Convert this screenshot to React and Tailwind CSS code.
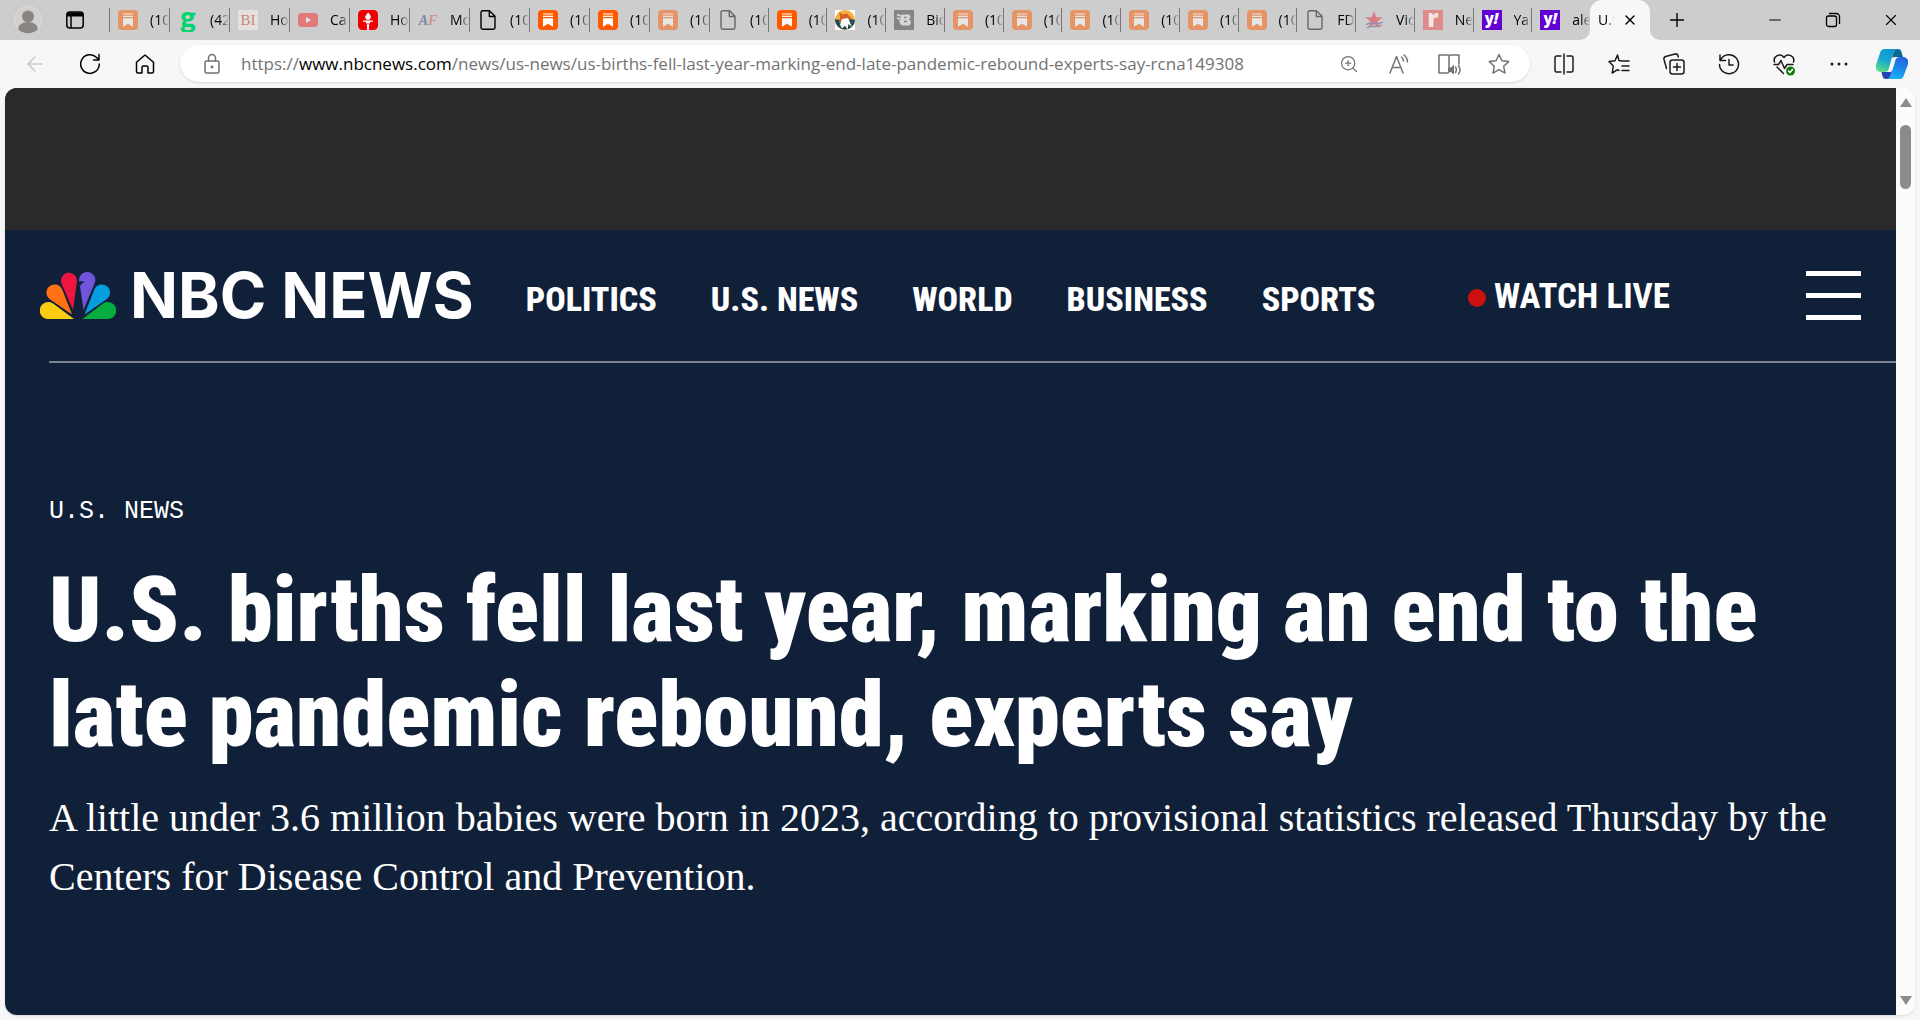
import { useState } from 'react';
import {
  ArrowLeft,
  Minus,
  Plus,
  X,
  ZoomIn,
} from 'lucide-react';

const tabs = [
  { icon: 'substack', faded: true, title: '(10' },
  { icon: 'g', title: '(42' },
  { icon: 'bi', faded: true, title: 'Ho' },
  { icon: 'youtube', faded: true, title: 'Ca' },
  { icon: 'torch', title: 'Ho' },
  { icon: 'af', faded: true, title: 'Mo' },
  { icon: 'file', title: '(10' },
  { icon: 'substack', title: '(10' },
  { icon: 'substack', title: '(10' },
  { icon: 'substack', faded: true, title: '(10' },
  { icon: 'file', faded: true, title: '(10' },
  { icon: 'substack', title: '(10' },
  { icon: 'fox', title: '(10' },
  { icon: 'biden', faded: true, title: 'Bid' },
  { icon: 'substack', faded: true, title: '(10' },
  { icon: 'substack', faded: true, title: '(10' },
  { icon: 'substack', faded: true, title: '(10' },
  { icon: 'substack', faded: true, title: '(10' },
  { icon: 'substack', faded: true, title: '(10' },
  { icon: 'substack', faded: true, title: '(10' },
  { icon: 'file', faded: true, title: 'FD' },
  { icon: 'star', faded: true, title: 'Vic' },
  { icon: 'r', faded: true, title: 'Ne' },
  { icon: 'yahoo', title: 'Yal' },
  { icon: 'yahoo', title: 'ale' },
];

const navLinks = ['POLITICS', 'U.S. NEWS', 'WORLD', 'BUSINESS', 'SPORTS'];

function Favicon({ name, faded }) {
  const box = faded ? 'size-5 shrink-0 opacity-50' : 'size-5 shrink-0';
  switch (name) {
    case 'substack':
      return (
        <svg viewBox="0 0 20 20" className={box}>
          <rect width="20" height="20" rx="4" fill="#ff5a00" />
          <path d="M5 4h10M5 6.3h10" stroke="#fff" strokeWidth="1.2" />
          <path d="M5 8.2h10v8.6l-5-3-5 3z" fill="#fff" />
        </svg>
      );
    case 'g':
      return <span className="flex size-5 shrink-0 items-center justify-center text-[30px] leading-5 pb-2 font-black text-[#00d56f] font-['Lato']">g</span>;
    case 'bi':
      return <span className="flex size-5 shrink-0 items-center justify-center bg-[#e5e2de] text-[15px] text-[#c98577] font-['Liberation_Serif']">BI</span>;
    case 'youtube':
      return (
        <svg viewBox="0 0 20 20" className={box}>
          <rect y="3" width="20" height="14" rx="3.5" fill="#f52a2a" />
          <path d="M8 7l5 3-5 3z" fill="#fff" />
        </svg>
      );
    case 'torch':
      return (
        <svg viewBox="0 0 20 20" className={box}>
          <rect width="20" height="20" rx="4.5" fill="#f00000" />
          <path d="M10 2.500c2 2 2.800 3 2.800 4.400a2.800 2.800 0 0 1-5.600 0C7.200 5.500 9 4.500 10 2.500z" fill="#fff" />
          <path d="M5 10.500h10v1.300h-2.500l-.8 1.700H8.300l-.8-1.700H5zM8.800 14.300h2.400L10.800 20H9.200z" fill="#fff" />
        </svg>
      );
    case 'af':
      return <span className="flex size-5 shrink-0 items-center justify-center text-[14px] font-bold italic text-[#7d86ab] font-['Liberation_Serif']">A<b className="text-[#cf9398]">F</b></span>;
    case 'file':
      return (
        <svg viewBox="0 0 20 20" className={box} fill="none" stroke="#000" strokeWidth="1.4">
          <path d="M5 .8h6.500L17 6.300V17.500a1.700 1.700 0 0 1-1.700 1.700H4.700A1.700 1.700 0 0 1 3 17.500V2.500A1.700 1.700 0 0 1 4.700.8zM11.300.8v5.700H17" strokeLinejoin="round" />
        </svg>
      );
    case 'fox':
      return (
        <svg viewBox="0 0 20 20" className={box}>
          <rect width="20" height="20" fill="#fff" />
          <circle cx="10" cy="10" r="10" fill="#f2b23c" />
          <path d="M0 9a10 10 0 0 0 20 1l-4-1-8 2z" fill="#1f4d5c" />
          <path d="M4 2l4 2.500 4-1 5 5.500-4 1-5 1-4 2 1-6z" fill="#d9602a" />
          <path d="M7 9l6-1 4 9-3.500-3-1 5.500-2.500-4-3 3-2-4z" fill="#fff" />
        </svg>
      );
    case 'biden':
      return (
        <svg viewBox="0 0 20 20" className="size-5 shrink-0">
          <rect width="20" height="20" fill="#858585" />
          <path d="M3 4.500l5 2M3 8l5 1.500M5 11l3 1" stroke="#d6d6d6" strokeWidth="1.800" />
          <path d="M7.500 4.500H13a2.500 2.500 0 0 1 1.500 5 3 3 0 0 1-1.500 6H9a3 3 0 0 1-3-3" fill="#d6d6d6" />
          <path d="M10 7.500h2.500M10 11.500h3" stroke="#858585" strokeWidth="1.300" />
        </svg>
      );
    case 'star':
      return (
        <svg viewBox="0 0 20 20" className={box}>
          <path d="M10 1l2.300 6.300H19l-5.300 4 2 6.700L10 14l-5.700 4 2-6.700L1 7.300h6.700z" fill="#e8323c" />
          <path d="M2 15c5-5 8 2 17-3M3 18c5-4 9 1 15-3" stroke="#4553a0" strokeWidth="1.300" fill="none" />
        </svg>
      );
    case 'r':
      return <span className="flex size-5 shrink-0 items-center justify-center bg-[#e08a8a] pb-1 text-[24px] leading-5 font-black text-[#f0e6e6] font-['Open_Sans']">r</span>;
    default:
      return <span className="flex size-5 shrink-0 items-center justify-center bg-[#6001d2] pb-1 text-[15px] leading-4 font-black text-white font-['Open_Sans']">y<i>!</i></span>;
  }
}

function Tab({ tab, wide }) {
  const size = wide ? 'w-[60px] shrink-0' : 'min-w-0 flex-1';
  return (
    <button className={`flex h-10 items-center ${size}`}>
      <span className="h-6 w-px shrink-0 bg-[#777]" />
      <span className="flex min-w-0 flex-1 items-center gap-3 overflow-hidden pl-2">
        <Favicon name={tab.icon} faded={tab.faded} />
        <span className="min-w-0 flex-1 overflow-hidden mask-r-from-50% pb-0.5 text-left text-[14px] whitespace-nowrap text-black">
          {tab.title}
        </span>
      </span>
    </button>
  );
}

function TabStrip() {
  return (
    <div className="flex h-10 shrink-0 items-center bg-[#cdcdcd]">
      <button aria-label="Profile" className="ml-3.5 shrink-0">
        <svg viewBox="0 0 28 28" className="size-7">
          <circle cx="14" cy="14" r="13.500" fill="#d2d0ce" stroke="#e1dfdd" />
          <circle cx="14" cy="10.500" r="6" fill="#8a8582" />
          <path d="M4 23a10 7 0 0 1 20 0 13.500 13.500 0 0 1-20 0z" fill="#8a8582" />
        </svg>
      </button>
      <button aria-label="Tab actions" className="ml-6 shrink-0">
        <svg viewBox="0 0 18 18" className="size-[18px]" fill="none" stroke="#000" strokeWidth="1.500">
          <rect x=".8" y="1" width="16.400" height="16" rx="3" />
          <path d="M1 3.500h16" strokeWidth="4" />
          <path d="M5 5v12" />
        </svg>
      </button>
      <div className="ml-[25px] flex min-w-0 flex-1">
        {tabs.map((tab, i) => (
          <Tab key={i} tab={tab} wide={i < 10} />
        ))}
      </div>
      <div className="relative flex h-10 w-[60px] shrink-0 items-center gap-2 rounded-t-xl bg-[#f7f7f7] pl-2">
        <svg viewBox="0 0 10 10" className="absolute bottom-0 -left-2.5 size-2.5">
          <path d="M10 0v10H0A10 10 0 0 0 10 0z" fill="#f7f7f7" />
        </svg>
        <svg viewBox="0 0 10 10" className="absolute bottom-0 -right-2.5 size-2.5">
          <path d="M0 0v10h10A10 10 0 0 1 0 0z" fill="#f7f7f7" />
        </svg>
        <span className="w-4 overflow-hidden mask-r-from-60% pb-0.5 text-[14px] whitespace-nowrap">U.S</span>
        <button aria-label="Close tab"><X className="size-4" strokeWidth={2} /></button>
      </div>
      <div className="flex w-[270px] shrink-0 items-center pl-4">
        <button aria-label="New tab"><Plus className="size-[22px]" strokeWidth={1.5} /></button>
        <div className="ml-auto flex items-center gap-10 pr-5">
          <button aria-label="Minimize"><Minus className="size-[18px]" strokeWidth={1.5} /></button>
          <button aria-label="Restore">
            <svg viewBox="0 0 18 18" className="size-[18px]" fill="none" stroke="#000" strokeWidth="1.300">
              <rect x="2.500" y="5" width="10" height="10.500" rx="2" />
              <path d="M5 2.500h7.500A3 3 0 0 1 15.500 5.500V13" />
            </svg>
          </button>
          <button aria-label="Close"><X className="size-[18px]" strokeWidth={1.5} /></button>
        </div>
      </div>
    </div>
  );
}

const starPath = 'M12 2.500l2.900 6.300 6.800.8-5 4.700 1.300 6.800-6-3.400-6 3.400 1.300-6.800-5-4.700 6.800-.8z';

function Icon({ children, className = 'size-6' }) {
  return (
    <svg viewBox="0 0 24 24" className={className} fill="none" stroke="currentColor" strokeWidth="1.500" strokeLinecap="round" strokeLinejoin="round">
      {children}
    </svg>
  );
}

function Toolbar() {
  const [url, setUrl] = useState('/news/us-news/us-births-fell-last-year-marking-end-late-pandemic-rebound-experts-say-rcna149308');

  return (
    <div className="flex h-12 shrink-0 items-center bg-[#f7f7f7] pb-px">
      <div className="flex w-[180px] shrink-0 items-center gap-[31px] pl-[23px]">
        <button aria-label="Back"><ArrowLeft className="size-6 text-[#c9c9c9]" strokeWidth={1.5} /></button>
        <button aria-label="Refresh">
          <Icon>
            <path d="M21.300 12A9.300 9.300 0 1 1 18.600 5.500L21 8M21 2.500V8h-5.500" />
          </Icon>
        </button>
        <button aria-label="Home">
          <Icon>
            <path d="M3.500 10.300L12 3l8.500 7.300V19.500a1.500 1.500 0 0 1-1.500 1.500h-4v-5.500a1.500 1.500 0 0 0-1.500-1.500h-3a1.500 1.500 0 0 0-1.500 1.500V21H5a1.500 1.500 0 0 1-1.500-1.500z" />
          </Icon>
        </button>
      </div>
      <div className="flex h-[37px] min-w-0 flex-1 items-center rounded-full bg-white pr-[19px] pl-5 text-[#737373] shadow-sm">
        <Icon>
          <rect x="5" y="9" width="14" height="12" rx="1.500" />
          <path d="M8.500 9V6a3.500 3.500 0 0 1 7 0v3" />
          <circle cx="12" cy="15" r=".7" fill="currentColor" />
        </Icon>
        <label htmlFor="url" className="ml-[17px] text-[17px]">
          https://<span className="text-black">www.nbcnews.com</span>
        </label>
        <input id="url" value={url} onChange={(e) => setUrl(e.target.value)} className="min-w-0 flex-1 text-[17px] outline-none" />
        <div className="flex items-center gap-[26px]">
          <button aria-label="Zoom"><ZoomIn className="size-6 p-0.5" strokeWidth={1.5} /></button>
          <button aria-label="Read aloud">
            <Icon>
              <path d="M3 21L9.500 4.500 16 21M5.300 15.500h8.400M14.500 5c1.500 1 2 2.500 2 4M17 3c2.500 2 3.500 4 3.500 7" />
            </Icon>
          </button>
          <button aria-label="Immersive reader">
            <Icon>
              <path d="M12 5v14.500a1.500 1.500 0 0 1-1.500 1.500H2V3h8.500A1.500 1.500 0 0 1 12 4.500 1.500 1.500 0 0 1 13.500 3H22v9M18.500 15c1 1.500 1 4 0 5.500M21.500 13.500c1.800 2.500 1.800 6 0 8.500" />
              <path d="M12 16h2l2.500-2.500v8.500L14 19.500h-2z" fill="currentColor" strokeWidth="1" />
            </Icon>
          </button>
          <button aria-label="Add to favorites"><Icon><path d={starPath} /></Icon></button>
        </div>
      </div>
      <div className="flex w-[390px] shrink-0 items-center gap-[31px] pl-[22px] text-[#1b1b1b]">
        <button aria-label="Split screen">
          <Icon>
            <path d="M9 4H4.500A1.500 1.500 0 0 0 3 5.500v13A1.500 1.500 0 0 0 4.500 20H9M12 2v20M15 4h4.500A1.500 1.500 0 0 1 21 5.500v13a1.500 1.500 0 0 1-1.500 1.500H15" />
          </Icon>
        </button>
        <button aria-label="Favorites">
          <Icon>
            <path d="M22 9h-7L12 8.600 10.500 3 8 8.800l-6 .7 4.300 4.500L5.200 21l5.300-3.300 1.500.8M15 14h7M15 18.500h7" />
          </Icon>
        </button>
        <button aria-label="Collections">
          <Icon>
            <rect x="8" y="8" width="14" height="14" rx="2.500" />
            <path d="M15 11.500v7M11.500 15h7M4.500 16.500L2 7.500A2.500 2.500 0 0 1 3.700 4.500L13 2a2.500 2.500 0 0 1 3 1.700L16.300 5" />
          </Icon>
        </button>
        <button aria-label="History">
          <Icon>
            <path d="M3 3v5.500h5.500M3.500 8A9.500 9.500 0 1 1 2.500 12.500M12 7.500V13h4" />
          </Icon>
        </button>
        <button aria-label="Browser essentials">
          <Icon>
            <path d="M2.500 10A5.300 5.300 0 0 1 12 5.500 5.300 5.300 0 0 1 21.500 10M2 12.500h4.500L9 8.500l3.500 8 2.500-4h6M5 15l6.500 6.500" />
            <circle cx="18.500" cy="19" r="4.500" fill="#107c10" stroke="none" />
            <path d="M16.500 19l1.500 1.500 2.500-3" stroke="#fff" />
          </Icon>
        </button>
        <button aria-label="Settings and more">
          <Icon>
            <g fill="currentColor" stroke="none">
              <circle cx="5" cy="12" r="1.500" />
              <circle cx="12" cy="12" r="1.500" />
              <circle cx="19" cy="12" r="1.500" />
            </g>
          </Icon>
        </button>
        <button aria-label="Copilot" className="-ml-1.5">
          <svg viewBox="0 0 32 32" className="size-8">
            <defs>
              <linearGradient id="copilotLeft" x1=".6" y1="0" x2=".2" y2="1">
                <stop stopColor="#0b93d6" />
                <stop offset=".5" stopColor="#18a9d0" />
                <stop offset="1" stopColor="#62e07c" />
              </linearGradient>
              <linearGradient id="copilotRight" x1=".7" y1="0" x2=".4" y2="1">
                <stop stopColor="#2460dc" />
                <stop offset="1" stopColor="#14b0f6" />
              </linearGradient>
            </defs>
            <path d="M9 1h13c-3 0-4 2-5 5l-4 14c-1 3-2 4-5 4H5c-4 0-6-3-5-7l4-12c1-3 2-4 5-4z" fill="url(#copilotLeft)" />
            <path d="M17 6c1-3 2-5 5-5 2 0 3 1 3.500 3L27 9h-6c-2 0-3 0-5 1z" fill="#0a6a8c" />
            <path d="M23 31H10c3 0 4-2 5-5l4-13c1-3 2-4 5-4h3c4 0 6 3 5 7l-4 11c-1 3-2 4-5 4z" fill="url(#copilotRight)" />
            <path d="M15 26c-1 3-2 5-5 5-2 0-3-1-3.500-3L5.500 24H10c3 0 4 0 6-1z" fill="#2242b8" />
            <path d="M16 10c1-1 3-1 6-1-2 .5-2.500 2-3 4l-3 10c-1 1-3 1-5 1 1.500-.5 2-2 2.500-4z" fill="#f7f7f7" />
          </svg>
        </button>
      </div>
    </div>
  );
}

function Peacock() {
  return (
    <svg viewBox="0 0 76 47" className="h-[47px] w-[76px] shrink-0">
      <path d="M34 47H8.500a8.500 8.500 0 1 1 4.500-15.500z" fill="#fccc12" />
      <path d="M32 42.500L9.500 27a8.200 8.200 0 1 1 12.500-10z" fill="#ff7112" />
      <path d="M33 38L21.500 11.500a8 8 0 1 1 15.500-3z" fill="#ef1541" />
      <path d="M43.500 38L40 14c1-2 3-3 5-4.500l-6-.2C39 4 42 0 47 0a8 8 0 0 1 7.500 11.500z" fill="#6e55dc" />
      <path d="M44.500 42.500L54.500 17A8.200 8.200 0 1 1 67 27z" fill="#069de0" />
      <path d="M42.500 47L63 31.500A8.500 8.500 0 1 1 67.500 47z" fill="#05ac3f" />
    </svg>
  );
}

function SiteHeader() {
  return (
    <header className="flex h-[131px] items-center pl-[35px]">
      <a href="#" className="flex items-center gap-3.5">
        <Peacock />
        <span className="text-[63px] leading-[47px] font-bold whitespace-nowrap font-['Inter']">NBC NEWS</span>
      </a>
      <nav className="ml-[52px] flex gap-[54px] pt-2 text-[34px] font-extrabold whitespace-nowrap font-['Roboto_Condensed','Roboto',sans-serif]">
        {navLinks.map((name) => (
          <a key={name} href="#">{name}</a>
        ))}
      </nav>
      <a href="#" className="mr-[136px] ml-auto flex items-center gap-2 pt-1 text-[35px] font-bold whitespace-nowrap font-['Roboto_Condensed','Roboto',sans-serif]">
        <span className="size-[18px] rounded-full bg-[#cb1010]" />
        WATCH LIVE
      </a>
      <button aria-label="Menu" className="mr-[35px] flex w-[55px] shrink-0 flex-col gap-[17px]">
        <span className="h-[5px] bg-white" />
        <span className="h-[5px] bg-white" />
        <span className="h-[5px] bg-white" />
      </button>
    </header>
  );
}

function Article() {
  return (
    <main className="ml-11 border-t-2 border-[#7b8392] pt-[131px]">
      <a href="#" className="text-[25px] leading-9 font-['Liberation_Mono']">U.S. NEWS</a>
      <h1 className="mt-7 text-[91px] leading-[105px] font-black font-['Roboto_Condensed','Roboto',sans-serif]">
        U.S. births fell last year, marking an end to the late pandemic rebound, experts say
      </h1>
      <p className="mt-5 pr-10 text-[40px] leading-[59px] font-['Liberation_Serif']">
        A little under 3.6 million babies were born in 2023, according to provisional statistics released Thursday by the Centers for Disease Control and Prevention.
      </p>
    </main>
  );
}

function Scrollbar() {
  return (
    <div className="flex w-[19px] shrink-0 flex-col items-center bg-[#fcfcfc] py-2.5">
      <svg viewBox="0 0 12 9" className="h-[9px] w-3"><path d="M6 0l6 9H0z" fill="#8b8b8b" /></svg>
      <div className="mt-[18px] h-16 w-[11px] rounded-full bg-[#8b8b8b]" />
      <svg viewBox="0 0 12 9" className="mt-auto h-[9px] w-3"><path d="M0 0h12L6 9z" fill="#8b8b8b" /></svg>
    </div>
  );
}

export default function App() {
  return (
    <div className="flex h-screen flex-col bg-[#f7f7f7] font-['Open_Sans',sans-serif]">
      <TabStrip />
      <Toolbar />
      <div className="mr-[5px] mb-[5px] ml-[5px] flex min-h-0 flex-1 overflow-hidden rounded-xl shadow">
        <div className="min-w-0 flex-1 overflow-hidden bg-[#112039] text-white">
          <div className="h-[142px] bg-[#2a2a2a]" />
          <SiteHeader />
          <Article />
        </div>
        <Scrollbar />
      </div>
    </div>
  );
}
